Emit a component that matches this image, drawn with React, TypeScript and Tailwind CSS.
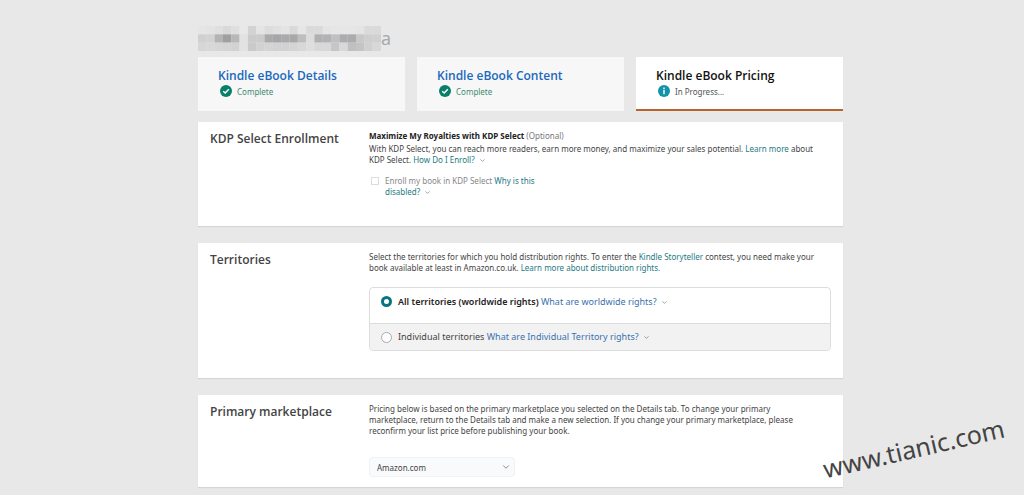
import type { ReactNode } from "react";
import { ChevronDown } from "lucide-react";

const mosaic = [
  ["#e5e5e5", "#e3e3e3", "#dfdfdf", "#d9d9d9", "#dfdfdf", "#e8e8e8", "#d2d2d2", "#e4e4e4", "#dcdcdc", "#e0e0e0", "#e4e4e4", "#d9d9d9", "#e6e6e6", "#dadada", "#dadada", "#e4e4e4", "#e6e6e6", "#e6e6e6", "#e6e6e6", "#e4e4e4", "#dadada", "#dadada"],
  ["#d0d0d0", "#d2d2d2", "#b4b4b4", "#9fa0a2", "#b8b8b8", "#e2e2e2", "#cbcbcb", "#cbcbcb", "#aaaaac", "#a6a6a8", "#aaaaac", "#a8a8aa", "#bebebe", "#dcdcdc", "#b0b0b2", "#b2b2b4", "#c0c0c2", "#acacae", "#acacae", "#c8c8c8", "#cecece", "#d0d0d0"],
  ["#d6d6d6", "#d8d8d8", "#d6d6d6", "#d4d4d4", "#d2d2d2", "#e2e2e2", "#cacaca", "#d2d2d2", "#d4d4d4", "#d2d2d2", "#d2d2d2", "#d4d4d4", "#d8d8d8", "#dedede", "#d8d8d8", "#d8d8d8", "#c6c6c6", "#d8d8d8", "#c0c0c0", "#c4c4c4", "#d0d0d0", "#d8d8d8"],
];

const steps = [
  { title: "Kindle eBook Details", status: "Complete", done: true },
  { title: "Kindle eBook Content", status: "Complete", done: true },
  { title: "Kindle eBook Pricing", status: "In Progress...", done: false },
];

function StatusIcon({ done }: { done: boolean }) {
  return (
    <svg viewBox="0 0 12 12" className="size-3 shrink-0" aria-hidden="true">
      <circle cx="6" cy="6" r="6" fill={done ? "#087f69" : "#1294a8"} />
      {done ? (
        <path d="M3.2 6.2 5.2 8 8.8 4.2" fill="none" stroke="#fff" strokeWidth="1.5" />
      ) : (
        <path d="M6 2.5v1.4M6 4.8v4.4" stroke="#fff" strokeWidth="1.4" />
      )}
    </svg>
  );
}

function Section({ title, className, children }: { title: string; className: string; children: ReactNode }) {
  return (
    <section className={`flex bg-white px-3 pt-2 shadow-[0_1px_1px_#d4d4d4] ${className}`}>
      <h2 className="w-[159px] shrink-0 font-['Open_Sans',sans-serif] text-[12px] leading-[18px] font-semibold text-[#444]">
        {title}
      </h2>
      <div className="min-w-0 flex-1">{children}</div>
    </section>
  );
}

function Help({ children, className = "text-[#257a82]" }: { children: ReactNode; className?: string }) {
  return (
    <>
      <a href="#" className={className}>{children}</a>
      <ChevronDown size={7} className="ml-1 inline text-[#666]" />
    </>
  );
}

export default function App() {
  return (
    <div className="relative min-h-screen overflow-hidden bg-[#e8e8e8] pt-[26px] pb-2 pl-[17px] font-['Noto_Sans',sans-serif] text-[8px] leading-[11px] text-[#444]">
      <div className="mx-auto max-w-[645px]">
        <header className="flex h-[25px] items-center">
          <svg viewBox="0 0 22 3" preserveAspectRatio="none" className="h-[25px] w-[183px]" aria-hidden="true">
            {mosaic.map((row, y) =>
              row.map((fill, x) => <rect key={`${x}-${y}`} x={x} y={y} width="1" height="1" fill={fill} />)
            )}
          </svg>
          <span className="text-[18px] text-[#a8a9ac]">a</span>
        </header>

        {/* Steps */}
        <nav className="mt-1.5 grid grid-cols-3 gap-3">
          {steps.map(({ title, status, done }) => (
            <div
              key={title}
              className={`h-[54px] px-5 pt-2.5 ${done ? "bg-[#f7f7f7]" : "border-b-2 border-[#b8652a] bg-white"}`}
            >
              <a
                href="#"
                className={`block font-['Open_Sans',sans-serif] text-[12px] leading-[18px] font-semibold ${done ? "text-[#1b68bd]" : "text-[#111]"}`}
              >
                {title}
              </a>
              <p className={`flex items-center gap-[5px] pl-0.5 ${done ? "text-[#3f8a72]" : "text-[#555]"}`}>
                <StatusIcon done={done} />
                {status}
              </p>
            </div>
          ))}
        </nav>

        <Section title="KDP Select Enrollment" className="mt-[11px] min-h-[104px]">
          <p className="mb-0.5">
            <strong className="text-[#222]">Maximize My Royalties with KDP Select</strong>{" "}
            <span className="text-[#777]">(Optional)</span>
          </p>
          <p className="pr-2">
            With KDP Select, you can reach more readers, earn more money, and maximize your sales potential.{" "}
            <a href="#" className="text-[#257a82]">Learn more</a> about KDP Select. <Help>How Do I Enroll?</Help>
          </p>
          <div className="mt-2.5 flex gap-1.5 pl-0.5">
            <input id="enroll" type="checkbox" disabled className="mt-0.5 size-2 appearance-none border border-[#ddd] bg-white" />
            <p className="w-[170px]">
              <label htmlFor="enroll" className="text-[#888]">Enroll my book in KDP Select</label>{" "}
              <Help>Why is this disabled?</Help>
            </p>
          </div>
        </Section>

        <Section title="Territories" className="mt-[17px] min-h-[135px]">
          <p>
            Select the territories for which you hold distribution rights. To enter the{" "}
            <a href="#" className="text-[#257a82]">Kindle Storyteller</a> contest, you need make your book available at
            least in Amazon.co.uk. <a href="#" className="text-[#257a82]">Learn more about distribution rights.</a>
          </p>
          <fieldset className="mt-3.5 overflow-hidden rounded-[4px] border border-[#ddd] text-[9px] leading-3">
            <div className="flex h-[35px] gap-1.5 px-[11px] pt-2">
              <input id="all" type="radio" name="territory" defaultChecked className="size-[11px] appearance-none rounded-full border border-[#aaa] bg-white checked:border-[3px] checked:border-[#087482]" />
              <p>
                <label htmlFor="all" className="font-semibold text-[#222]">All territories (worldwide rights)</label>{" "}
                <Help className="text-[#3972ae]">What are worldwide rights?</Help>
              </p>
            </div>
            <div className="flex h-[27px] items-center gap-1.5 border-t border-[#ddd] bg-[#f2f2f2] px-[11px]">
              <input id="individual" type="radio" name="territory" className="size-[11px] appearance-none rounded-full border border-[#aaa] bg-white checked:border-[3px] checked:border-[#087482]" />
              <p>
                <label htmlFor="individual">Individual territories</label>{" "}
                <Help className="text-[#3972ae]">What are Individual Territory rights?</Help>
              </p>
            </div>
          </fieldset>
        </Section>

        <Section title="Primary marketplace" className="mt-[17px] min-h-[92px]">
          <p className="pr-4">
            Pricing below is based on the primary marketplace you selected on the Details tab. To change your primary
            marketplace, return to the Details tab and make a new selection. If you change your primary marketplace,
            please reconfirm your list price before publishing your book.
          </p>
          <div className="mt-[21px] grid w-[146px] items-center">
            <select aria-label="Primary marketplace" className="col-start-1 row-start-1 h-5 appearance-none rounded-[4px] border border-[#f0f2f3] bg-[#f8fafb] px-[7px]">
              <option>Amazon.com</option>
            </select>
            <ChevronDown size={10} className="pointer-events-none col-start-1 row-start-1 mr-1 justify-self-end text-[#777]" />
          </div>
        </Section>
      </div>

      <span className="absolute right-[18px] bottom-[32px] -rotate-[13deg] text-[25px] leading-[30px] text-[#444]">www.tianic.com</span>
    </div>
  );
}
